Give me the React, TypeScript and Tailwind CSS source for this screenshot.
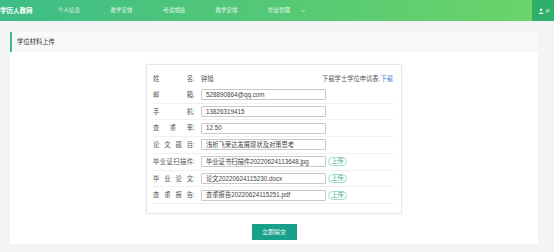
import React from "react";

const font = { fontFamily: '"Liberation Sans", "Noto Sans CJK SC", sans-serif' };

function Label({ text }: { text: string }) {
  return (
    <div className="flex w-[48px] shrink-0 items-center text-[6.3px] text-[#555]">
      <span className="w-[40px] text-justify [text-align-last:justify]">{text}</span>
      <span>:</span>
    </div>
  );
}

function Row({ label, value, upload, divider = true }: { label: string; value?: string; upload?: boolean; divider?: boolean }) {
  return (
    <div className={`flex h-[16.75px] items-center ${divider ? "border-b border-[#f0f0f0]" : ""}`}>
      <Label text={label} />
      <div className="flex h-[11px] w-[125px] items-center rounded-[1px] border border-[#c8c8c8] bg-white pl-[4px] text-[6.3px] text-[#444]">
        {value}
      </div>
      {upload && (
        <div className="ml-[2px] flex h-[9px] w-[19px] items-center justify-center rounded-full border border-[#9fdcc0] text-[6px] text-[#3bb37a]">
          上传
        </div>
      )}
    </div>
  );
}

export default function App() {
  const nav = ["个人信息", "教学安排", "考试成绩", "教学安排", "毕业管理"];
  return (
    <div style={font} className="h-[252px] w-[554px] overflow-hidden bg-[#f2f4f6]">
      <div className="flex h-[21px] items-center bg-[linear-gradient(90deg,#3dbd86,#6dd467)]">
        <div className="w-[58px] pl-[0px] text-[6.5px] font-bold text-white">学历人教网</div>
        <div className="flex items-center gap-[30.5px] text-[5.5px] text-white/85">
          {nav.map((n, i) => (
            <span key={i} className="flex items-center">
              {n}
              {i === nav.length - 1 && (
                <svg width="6" height="6" viewBox="0 0 10 10" className="ml-[10px]">
                  <path d="M2 3.5 L5 6.5 L8 3.5" stroke="white" strokeOpacity="0.8" fill="none" strokeWidth="1.2" />
                </svg>
              )}
            </span>
          ))}
        </div>
        <div className="ml-auto flex h-full w-[22px] items-center gap-[2px] bg-[#2fb06a] pl-[6px] text-[6px] text-white">
          <svg width="6" height="6" viewBox="0 0 10 10">
            <circle cx="5" cy="3" r="2.2" fill="white" />
            <path d="M0.8 10 C1 6.5 9 6.5 9.2 10 Z" fill="white" />
          </svg>
          <span>p</span>
        </div>
      </div>

      <div className="ml-[10px] mt-[11px] w-[528px]">
        <div className="flex h-[20px] items-center border-l-[2px] border-[#3dbd86] bg-[#f7f8f8] pl-[5px] text-[6.3px] text-[#333]">
          学位材料上传
        </div>
        <div className="flex h-[192px] flex-col items-center bg-white pt-[12px]">
          <div className="w-[256px] border border-[#e6e6e6] pb-[9px] pl-[6px] pr-[8px] pt-[5px] shadow-[0_0_3px_rgba(0,0,0,0.04)]">
            <div className="flex h-[16.75px] items-center">
              <Label text="姓名" />
              <span className="text-[6.3px] text-[#444]">钟旭</span>
              <span className="ml-auto text-[6.3px] text-[#555]">
                下载学士学位申请表:<span className="text-[#3a7fd5]">下载</span>
              </span>
            </div>
            <Row label="邮箱" value="528890864@qq.com" />
            <Row label="手机" value="13826319415" />
            <Row label="查重率" value="12.50" />
            <Row label="论文题目" value="浅析飞荣达发展现状及对策思考" />
            <Row label="毕业证扫描件" value="毕业证书扫描件20220624113648.jpg" upload />
            <Row label="毕业论文" value="论文20220624115230.docx" upload />
            <Row label="查重报告" value="查重报告20220624115251.pdf" upload />
          </div>
          <button className="mt-[10px] flex h-[16px] w-[45px] items-center justify-center bg-[#17a08a] text-[6px] text-white">
            立即提交
          </button>
        </div>
      </div>
    </div>
  );
}
